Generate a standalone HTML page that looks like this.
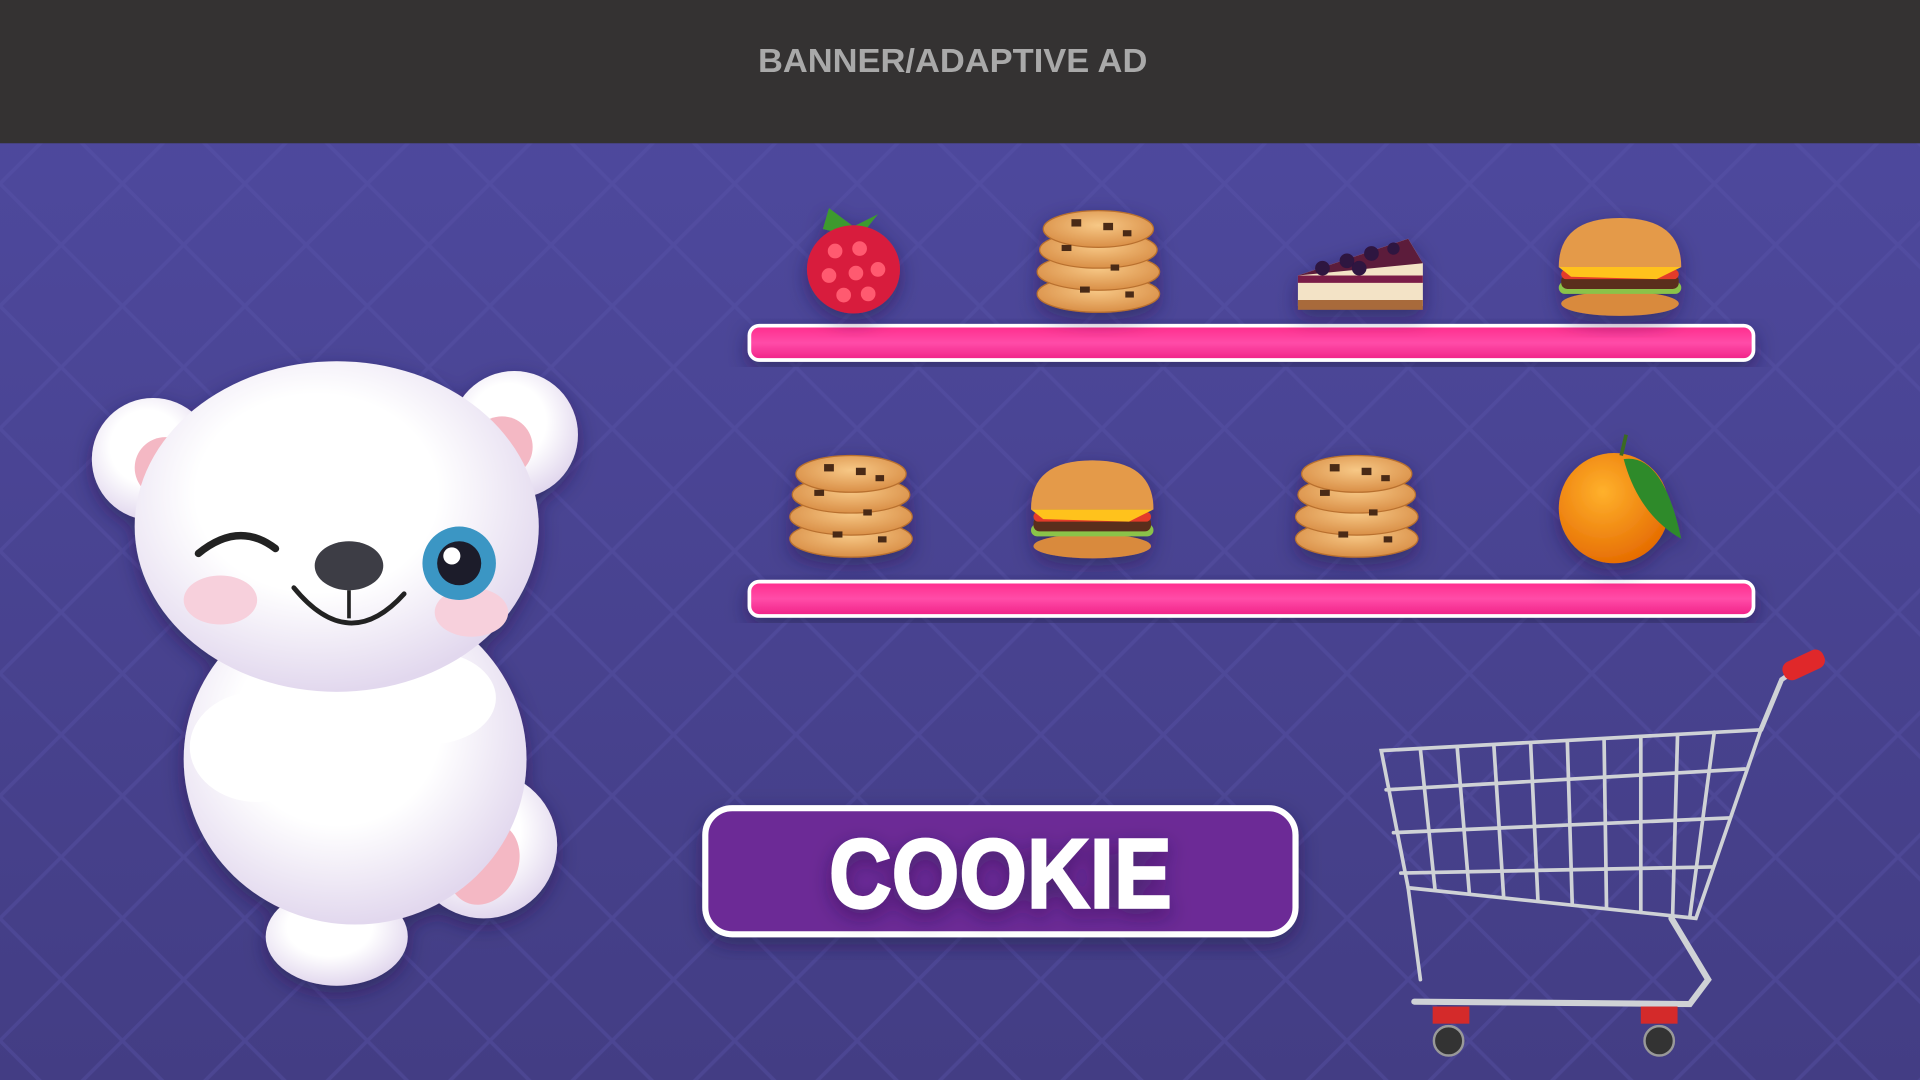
<!DOCTYPE html>
<html><head><meta charset="utf-8"><style>
html,body{margin:0;padding:0;width:1920px;height:1080px;overflow:hidden;background:#45408a}
svg{display:block}
</style></head><body>
<svg width="1920" height="1080" viewBox="0 0 1568 882" xmlns="http://www.w3.org/2000/svg">
<defs>
<linearGradient id="bg" x1="0" y1="0" x2="0" y2="1"><stop offset="0" stop-color="#4f4aa0"/><stop offset="1" stop-color="#433d84"/></linearGradient>
<pattern id="dia" width="100" height="100" patternUnits="userSpaceOnUse"><path d="M0 50 L50 0 L100 50 L50 100Z" fill="none" stroke="#5a55ab" stroke-width="3" opacity="0.35"/></pattern>
<linearGradient id="pink" x1="0" y1="0" x2="0" y2="1"><stop offset="0" stop-color="#ff2c8c"/><stop offset="0.5" stop-color="#ff4ca8"/><stop offset="1" stop-color="#f02086"/></linearGradient>
<radialGradient id="fur" cx="0.45" cy="0.4" r="0.6"><stop offset="0.5" stop-color="#ffffff"/><stop offset="1" stop-color="#e2d8ee"/></radialGradient>
<filter id="sh" x="-20%" y="-20%" width="140%" height="140%"><feDropShadow dx="0" dy="6" stdDeviation="8" flood-color="#1a1040" flood-opacity="0.5"/></filter>
<radialGradient id="cookie" cx="0.5" cy="0.4" r="0.6"><stop offset="0" stop-color="#f7c886"/><stop offset="1" stop-color="#d98f47"/></radialGradient>
<radialGradient id="orange" cx="0.4" cy="0.35" r="0.7"><stop offset="0" stop-color="#ffb12c"/><stop offset="1" stop-color="#e56a00"/></radialGradient>
<g id="cookies">
<ellipse cx="0" cy="28" rx="50" ry="15" fill="url(#cookie)" stroke="#b86f2e"/>
<ellipse cx="0" cy="10" rx="50" ry="15" fill="url(#cookie)" stroke="#b86f2e"/>
<ellipse cx="0" cy="-8" rx="48" ry="15" fill="url(#cookie)" stroke="#b86f2e"/>
<ellipse cx="0" cy="-25" rx="45" ry="15" fill="url(#cookie)" stroke="#b86f2e"/>
<g fill="#4a2a18"><rect x="-22" y="-33" width="8" height="6"/><rect x="4" y="-30" width="8" height="6"/><rect x="20" y="-24" width="7" height="5"/><rect x="-30" y="-12" width="8" height="5"/><rect x="10" y="4" width="7" height="5"/><rect x="-15" y="22" width="8" height="5"/><rect x="22" y="26" width="7" height="5"/></g>
</g>
<g id="burger">
<ellipse cx="0" cy="32" rx="48" ry="10" fill="#d98a3e"/>
<rect x="-50" y="14" width="100" height="10" rx="5" fill="#8bc34a"/>
<rect x="-48" y="8" width="96" height="12" rx="5" fill="#5a2f1c"/>
<rect x="-48" y="4" width="96" height="8" rx="4" fill="#e33a2a"/>
<path d="M-50 2 L50 2 L30 12 L-40 10Z" fill="#ffc21a"/>
<path d="M-50 2 Q-50 -38 0 -38 Q50 -38 50 2Z" fill="#e49a48"/>
</g>
</defs>
<rect width="1568" height="882" fill="url(#bg)"/>
<rect y="117" width="1568" height="765" fill="url(#dia)"/>
<rect width="1568" height="117" fill="#343232"/>
<text x="778" y="59" text-anchor="middle" font-family="Liberation Sans, sans-serif" font-weight="bold" font-size="27" fill="#a9a9a9" textLength="318" lengthAdjust="spacingAndGlyphs">BANNER/ADAPTIVE AD</text>

<!-- shelves -->
<rect x="612" y="266" width="820" height="28" rx="8" fill="url(#pink)" stroke="#fff" stroke-width="3" filter="url(#sh)"/>
<rect x="612" y="475" width="820" height="28" rx="8" fill="url(#pink)" stroke="#fff" stroke-width="3" filter="url(#sh)"/>

<!-- row 1 -->
<g filter="url(#sh)">
<g transform="translate(697,215)"><path d="M-20 -45 L0 -30 L20 -40 L8 -25 L25 -20 L0 -22 L-25 -28Z" fill="#3e9a2e"/><ellipse cx="0" cy="5" rx="38" ry="36" fill="#d81e3c"/>
<g fill="#ff5a70"><circle cx="-15" cy="-10" r="6"/><circle cx="5" cy="-12" r="6"/><circle cx="-20" cy="10" r="6"/><circle cx="2" cy="8" r="6"/><circle cx="20" cy="5" r="6"/><circle cx="-8" cy="26" r="6"/><circle cx="12" cy="25" r="6"/></g></g>
<use href="#cookies" x="897" y="212"/>
<g transform="translate(1110,225)"><path d="M-50 0 L40 -30 L52 -10 L52 25 L-50 25Z" fill="#f3e3c6"/><path d="M-50 0 L40 -30 L52 -10Z" fill="#5b1a3a"/><rect x="-50" y="0" width="102" height="6" fill="#7a1d46"/><rect x="-50" y="20" width="102" height="8" fill="#a86a3a"/><g fill="#2e1240"><circle cx="-30" cy="-6" r="6"/><circle cx="-10" cy="-12" r="6"/><circle cx="10" cy="-18" r="6"/><circle cx="28" cy="-22" r="5"/><circle cx="0" cy="-6" r="6"/></g></g>
<use href="#burger" x="1323" y="216"/>
</g>

<!-- row 2 -->
<g filter="url(#sh)">
<use href="#cookies" x="695" y="412"/>
<use href="#burger" x="892" y="414"/>
<use href="#cookies" x="1108" y="412"/>
<g transform="translate(1318,410)"><circle cx="0" cy="5" r="45" fill="url(#orange)"/><path d="M8 -35 Q40 -40 55 30 Q20 10 8 -35Z" fill="#2f8a2a"/><path d="M6 -38 L10 -55" stroke="#3a6a20" stroke-width="3"/></g>
</g>

<!-- button -->
<rect x="576" y="660" width="482" height="103" rx="22" fill="#6c2c96" stroke="#fff" stroke-width="5" filter="url(#sh)"/>
<text x="817" y="741" text-anchor="middle" font-family="Liberation Sans, sans-serif" font-weight="bold" font-size="80" fill="#fff" stroke="#fff" stroke-width="2" textLength="280" lengthAdjust="spacingAndGlyphs" filter="url(#sh)">COOKIE</text>

<!-- cart -->
<g fill="none" stroke="#cfd2d6" stroke-width="3" stroke-linecap="round">
<path d="M1128 613 L1438 596 L1385 750 L1150 725 Z"/>
<path d="M1132 645 L1425 628 M1138 680 L1412 668 M1144 713 L1398 708"/>
<path d="M1160 612 L1172 727 M1190 610 L1200 730 M1220 609 L1228 733 M1250 607 L1256 736 M1280 606 L1284 739 M1310 604 L1312 742 M1340 602 L1340 745 M1370 600 L1366 747 M1400 598 L1380 749"/>
<path d="M1438 596 L1455 555 L1470 545" stroke-width="4"/>
<path d="M1365 750 L1395 800 L1380 820 L1155 818" stroke-width="5"/>
<path d="M1150 725 L1160 800"/>
</g>
<rect x="1455" y="535" width="36" height="16" rx="7" fill="#e0282a" transform="rotate(-25 1473 543)"/>
<g fill="#d42a2a"><rect x="1170" y="822" width="30" height="14"/><rect x="1340" y="822" width="30" height="14"/></g>
<g fill="#333" stroke="#999" stroke-width="2"><circle cx="1183" cy="850" r="12"/><circle cx="1355" cy="850" r="12"/></g>

<!-- bear -->
<g filter="url(#sh)">
<ellipse cx="395" cy="690" rx="60" ry="60" fill="url(#fur)"/>
<ellipse cx="395" cy="705" rx="28" ry="35" fill="#f4b8c4" transform="rotate(25 395 705)"/>
<ellipse cx="275" cy="765" rx="58" ry="40" fill="url(#fur)"/>
<ellipse cx="290" cy="620" rx="140" ry="135" fill="url(#fur)"/>
<ellipse cx="210" cy="610" rx="55" ry="45" fill="#fff"/>
<ellipse cx="350" cy="570" rx="55" ry="38" fill="#fff"/>
<circle cx="125" cy="375" r="50" fill="url(#fur)"/><circle cx="135" cy="382" r="25" fill="#f4b8c4"/>
<circle cx="420" cy="355" r="52" fill="url(#fur)"/><circle cx="410" cy="365" r="25" fill="#f4b8c4"/>
<ellipse cx="275" cy="430" rx="165" ry="135" fill="url(#fur)"/>
<ellipse cx="180" cy="490" rx="30" ry="20" fill="#f7d0dc"/>
<ellipse cx="385" cy="500" rx="30" ry="20" fill="#f7d0dc"/>
<path d="M162 452 Q195 425 225 448" fill="none" stroke="#222" stroke-width="6" stroke-linecap="round"/>
<circle cx="375" cy="460" r="30" fill="#3a96c4"/><circle cx="375" cy="460" r="18" fill="#1a1a2a"/><circle cx="369" cy="454" r="7" fill="#fff"/>
<ellipse cx="285" cy="462" rx="28" ry="20" fill="#3c3c44"/>
<path d="M240 480 Q285 535 330 485" fill="none" stroke="#222" stroke-width="4" stroke-linecap="round"/>
<path d="M285 482 L285 505" stroke="#222" stroke-width="3"/>
</g>
</svg>
</body></html>
